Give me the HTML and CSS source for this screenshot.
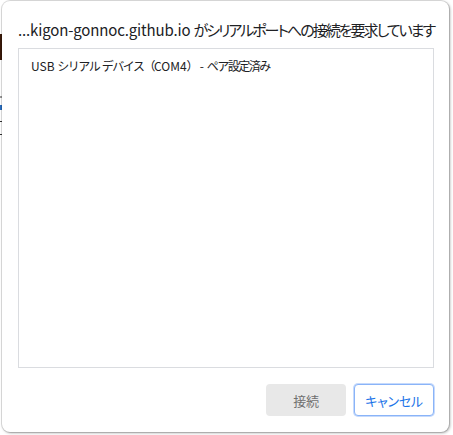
FILE: index.html
```html
<!DOCTYPE html>
<html lang="ja">
<head>
<meta charset="utf-8">
<link rel="stylesheet" href="styles.css">
</head>
<body>
<div class="page">
  <div class="backdrop">
    <div class="bd bd-dark"></div>
    <div class="bd bd-gap1"></div>
    <div class="bd bd-line"></div>
    <div class="bd bd-gap2"></div>
    <div class="bd bd-blue"></div>
    <div class="bd bd-gap3"></div>
    <div class="bd bd-line2"></div>
    <div class="bd bd-gap4"></div>
    <div class="bd bd-line3"></div>
  </div>
  <div class="dialog">
    <div class="title">...kigon-gonnoc.github.io <span class="jp">がシリアルポートへの接続を要求しています</span></div>
    <div class="list">
      <div class="item">USB <span class="jp">シリアル</span> <span class="jp">デバイス（</span>COM4<span class="jp">）</span> - <span class="jp">ペア設定済み</span></div>
    </div>
    <div class="actions">
      <button class="btn btn-connect">接続</button>
      <button class="btn btn-cancel">キャンセル</button>
    </div>
  </div>
</div>
</body>
</html>
```
FILE: styles.css
```css
html, body {
  margin: 0;
  padding: 0;
  background: #ffffff;
}
body {
  width: 453px;
  height: 435px;
  overflow: hidden;
  font-family: "Noto Sans CJK JP", "Noto Sans", sans-serif;
}
.page {
  display: flex;
  height: 435px;
}
.backdrop {
  width: 2px;
  display: flex;
  flex-direction: column;
  padding-top: 34px;
}
.bd { width: 2px; }
.bd-dark { height: 26px; background: #3a1a0a; }
.bd-gap1 { height: 36px; }
.bd-line { height: 2px; background: #9a9a9a; }
.bd-gap2 { height: 7px; }
.bd-blue { height: 5px; background: #2a6fc0; }
.bd-gap3 { height: 11px; }
.bd-line2 { height: 1px; background: #333; }
.bd-gap4 { height: 12px; }
.bd-line3 { height: 1px; background: #333; }

.dialog {
  margin-top: 1px;
  width: 447px;
  height: 431px;
  box-sizing: border-box;
  background: #fff;
  border-radius: 8px;
  box-shadow: 0 0 0 1px rgba(0,0,0,0.12), 1px 1px 3px rgba(0,0,0,0.35);
  padding: 0 15px 0 16px;
  display: flex;
  flex-direction: column;
}
.title {
  margin-top: 18px;
  height: 22px;
  line-height: 22px;
  font-size: 15px;
  color: #202124;
  white-space: nowrap;
  letter-spacing: -0.15px;
}
.title .jp {
  font-feature-settings: "palt";
  letter-spacing: -2px;
}
.list {
  margin-top: 7px;
  height: 320px;
  box-sizing: border-box;
  border: 1px solid #dadce0;
  padding: 9px 12px;
}
.item {
  font-size: 12px;
  line-height: 16px;
  color: #202124;
  white-space: nowrap;
}
.item .jp {
  letter-spacing: -1.5px;
}
.actions {
  margin-top: 16px;
  display: flex;
  justify-content: flex-end;
  gap: 8px;
}
.btn {
  width: 80px;
  height: 32px;
  box-sizing: border-box;
  border-radius: 4px;
  font-family: inherit;
  font-size: 13px;
  padding: 0;
  font-feature-settings: "palt";
  letter-spacing: -0.3px;
}
.btn-connect {
  background: #e8e8e8;
  border: none;
  color: #6f6f6f;
}
.btn-cancel {
  background: #fff;
  border: 1px solid #8ab4f8;
  box-shadow: 0 0 0 1px #c6dafc;
  color: #1a73e8;
}
```
